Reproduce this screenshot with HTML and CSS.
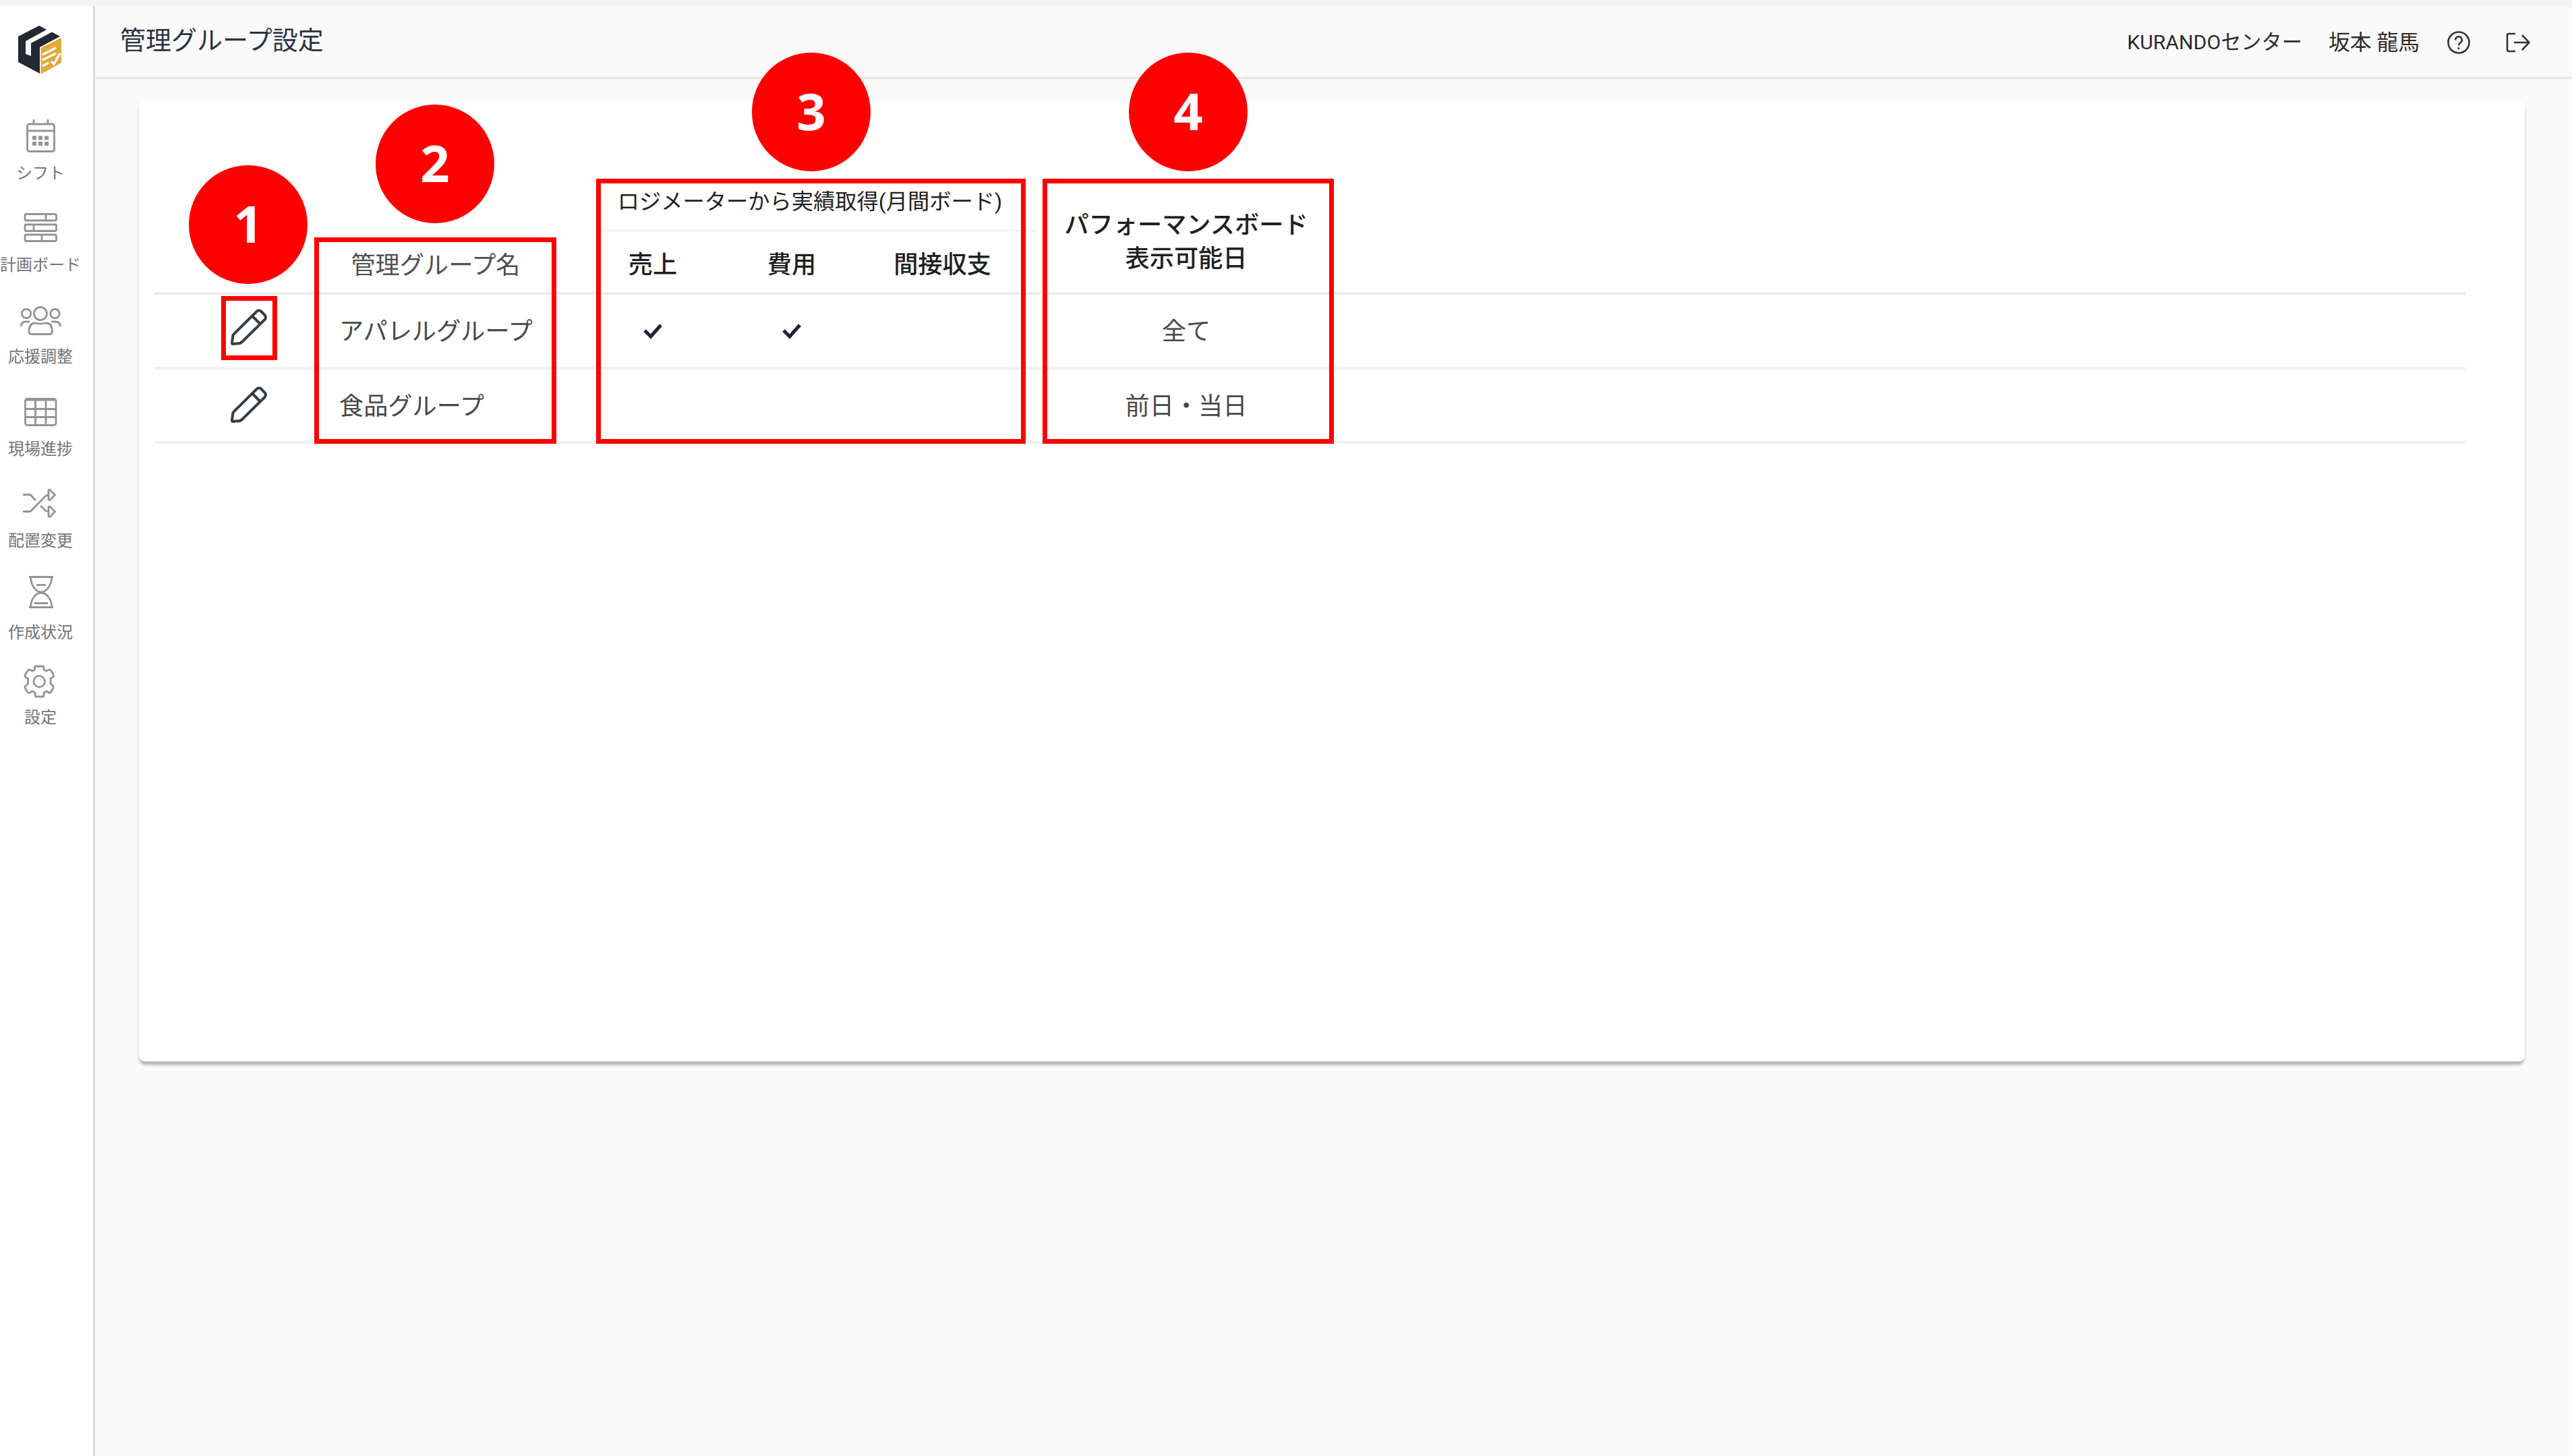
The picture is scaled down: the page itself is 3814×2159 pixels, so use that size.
FILE: index.html
```html
<!DOCTYPE html>
<html lang="ja">
<head>
<meta charset="utf-8">
<title>管理グループ設定</title>
<link rel="stylesheet" href="styles.css">
</head>
<body>
<div class="app">
  <nav class="sidebar">
    <svg class="logo" viewBox="0 20 120 100">
      <path fill="#232833" d="M58 38L69 44L38 61V80L46 83V64L77 47.500L89 54L59 70V109L27 92V54Z"/>
      <path fill="#e2a93b" d="M60.500 71L91 56V93L60.500 110Z"/>
      <path fill="none" stroke="#fff" stroke-width="3.200" d="M63 81L83 71M63 89L83 79M63 98L72 93M76 91L80 95L89 79"/>
    </svg>
    <a class="item"><svg viewBox="0 160 120 80"><rect x="40.500" y="184" width="40" height="40.500" rx="3"/><path d="M40 194H81M50 177V184M71 177V184"/><path class="dots" d="M48 204.500H54M57 204.500H63M66 204.500H72M48 213H54M57 213H63M66 213H72"/></svg><span>シフト</span></a>
    <a class="item"><svg viewBox="0 296 120 80"><rect x="37" y="317.500" width="46.500" height="9.500" rx="2"/><rect x="37" y="333" width="46.500" height="9.500" rx="2"/><rect x="37" y="348" width="46.500" height="9.500" rx="2"/><path d="M68 317V327M50 333V343M62 348V358"/></svg><span>計画ボード</span></a>
    <a class="item"><svg viewBox="0 432 120 80"><circle cx="60" cy="465" r="9.500"/><circle cx="39" cy="465" r="6.700"/><circle cx="81.500" cy="465" r="6.700"/><path d="M31 484Q32 477 38 477H44M76 477H82Q89 477 89.500 484M52 479Q60 481 68 479C75 479 77.500 484 77.500 492Q77 495.500 74 495.500H47Q43 495.500 43 492C43 484 45 479 52 479Z"/></svg><span>応援調整</span></a>
    <a class="item"><svg viewBox="0 568 120 80"><rect x="37.500" y="590.500" width="45.500" height="39" rx="3"/><path d="M37 592H83M37 605.500H83M37 617.500H83M52.500 592V630M68 592V630"/></svg><span>現場進捗</span></a>
    <a class="item"><svg viewBox="0 705 120 80"><path d="M34 733.500H45L53 742M34 758.500H45L67 736L71 733.500M60 750L68 757.500L71 758.500M72 726.500V741L74 741.500L81.500 734L74 726ZM72 751.500V766L74 766.500L81.500 758.500L74 751Z"/></svg><span>配置変更</span></a>
    <a class="item item-short"><svg viewBox="0 841 120 80"><path d="M43 855.500H79M43 900.500H79M45.500 856C46 868 53 878 61 878S76 868 77 856M45.500 900C46 888 53 879 61 879S76 888 77 900M54 867.300H68M51 894.500H71"/></svg><span>作成状況</span></a>
    <a class="item"><svg viewBox="0 967 120 80"><circle cx="58.200" cy="1010.500" r="8.300"/><path d="M53 988H63Q65 988 65 990V993L68.500 995L73 993Q75 993 76 994.500L79.500 1001.500Q79.500 1003 78.500 1004L75 1006V1014L78.500 1017Q79.500 1018 79 1020L75.500 1026.500Q74 1028 72.500 1027L68.500 1025L65 1027.500V1030.500Q65 1033 63 1033H54Q52 1033 52 1031V1027.500L48 1025L44.500 1027Q42 1028 41 1026.500L37 1020Q36.500 1018 38 1017L41.500 1014V1006L38 1004Q36.500 1003 37 1001L41 994.500Q42 993 44 993L48 995L51.500 993V990Q51.500 988 53 988Z"/></svg><span>設定</span></a>
  </nav>
  <div class="content">
    <header class="topbar">
      <h1>管理グループ設定</h1>
      <div class="account">
        <span class="center-name">KURANDOセンター</span>
        <span class="user">坂本 龍馬</span>
        <svg class="help" viewBox="0 0 36 36"><circle cx="18" cy="18" r="15.500"/><path d="M13.300 14.500A4.700 4.700 0 1 1 20.500 18Q18 19.800 18 22.500M18 25.200V28"/></svg>
        <svg class="logout" viewBox="0 0 36 30"><path d="M14 2H4Q2 2 2 4V26Q2 28 4 28H14M12 15H34M24 4L34.500 15L24 26"/></svg>
      </div>
    </header>
    <main class="card">
      <div class="row head">
        <div></div>
        <div class="name">管理グループ名</div>
        <div class="group">
          <div class="group-title">ロジメーターから実績取得(月間ボード)</div>
          <div class="group-cols"><span>売上</span><span>費用</span><span>間接収支</span></div>
        </div>
        <div class="days">パフォーマンスボード<br>表示可能日</div>
      </div>
      <div class="row">
        <div class="edit"><svg viewBox="0 0 54 54"><path d="M39 3.500Q42 1 45 3.500L50.500 9Q53 12 51 15.500L17 49L14 51L3 52Q2 52 2 50L3.500 39L6 36ZM32.500 11L43.500 22"/></svg></div>
        <div class="name">アパレルグループ</div>
        <div class="marks">
          <svg viewBox="0 0 28 24"><path d="M2 11L11 20L26 3"/></svg>
          <svg viewBox="0 0 28 24"><path d="M2 11L11 20L26 3"/></svg>
        </div>
        <div class="days">全て</div>
      </div>
      <div class="row">
        <div class="edit low"><svg viewBox="0 0 54 54"><path d="M39 3.500Q42 1 45 3.500L50.500 9Q53 12 51 15.500L17 49L14 51L3 52Q2 52 2 50L3.500 39L6 36ZM32.500 11L43.500 22"/></svg></div>
        <div class="name">食品グループ</div>
        <div class="marks"></div>
        <div class="days">前日・当日</div>
      </div>
    </main>
  </div>
</div>
<div class="frame f1"></div><div class="frame f2"></div><div class="frame f3"></div><div class="frame f4"></div>
<div class="badge b1">1</div><div class="badge b2">2</div><div class="badge b3">3</div><div class="badge b4">4</div>
</body>
</html>
```
FILE: styles.css
```css
* { box-sizing: border-box; }
body {
  margin: 0;
  background: #fafafa;
  font-family: Roboto, "Noto Sans CJK JP", sans-serif;
  color: #484848;
}
.app {
  display: flex;
  height: 2159px;
  border-top: 9px solid #f4f4f4;
}
svg { display: block; fill: none; }

/* Sidebar */
.sidebar {
  flex: none;
  width: 141px;
  background: #fff;
  border-right: 3px solid #d9d9d9;
  padding-top: 11px;
}
.logo { width: 120px; height: 100px; margin-bottom: 40px; }
.item {
  display: flex;
  flex-direction: column;
  align-items: center;
  width: 120px;
  height: 136.200px;
  font-size: 24px;
  line-height: 34px;
  white-space: nowrap;
  color: #747474;
}
.item-short { height: 126px; }
.item svg { width: 120px; height: 80px; stroke: #949494; stroke-width: 2.800; }
.item .dots { stroke-width: 6; }

/* Top bar */
.content { flex: 1; }
.topbar {
  display: flex;
  justify-content: space-between;
  align-items: center;
  height: 108px;
  padding: 0 62px 0 37px;
  border-bottom: 3px solid #e6e6e6;
}
h1 {
  margin: 0 0 3px;
  font-size: 38px;
  line-height: 56px;
  font-weight: 400;
  color: #2b3240;
}
.account {
  display: flex;
  align-items: center;
  line-height: 44px;
  color: #2c2c2c;
}
.center-name { margin: 2px 39px 0 0; font-size: 30.200px; }
.user { margin: 2px 40px 0 0; font-size: 31.800px; }
.account svg { stroke: #333; stroke-width: 2.600; margin-top: 2px; }
.help { width: 36px; height: 36px; margin-right: 52px; }
.logout { width: 36px; height: 30px; }

/* Settings table */
.card {
  width: 3538px;
  height: 1424px;
  margin: 33px 0 0 65px;
  padding: 115px 88px 0 22px;
  background: #fff;
  border-radius: 9px;
  box-shadow: 0 8px 5px -3px rgba(0, 0, 0, .2), 0 4px 5px rgba(0, 0, 0, .14);
}
.row {
  display: grid;
  grid-template-columns: 275px 381px 654px 442px 1fr;
  align-items: center;
  height: 110.700px;
  border-bottom: 4px solid #f1f1f1;
  font-size: 36.200px;
  line-height: 50px;
}
.name, .days { padding-top: 3px; }
.head { height: 172px; border-color: #ededed; color: #1f1f1f; }
.head .name { width: 286px; text-align: center; padding-top: 89px; color: #505050; }
.group { align-self: stretch; }
.group-title {
  height: 78px;
  padding-right: 20px;
  border-bottom: 2px solid #f0f0f0;
  text-align: center;
  font-size: 32.250px;
  line-height: 69px;
}
.group-cols, .marks {
  display: grid;
  grid-template-columns: 168px 244px 203px;
  justify-items: center;
}
.group-cols { padding-top: 25px; font-weight: 500; }
.days { text-align: center; }
.head .days { padding-top: 20px; font-weight: 500; }
.edit { padding-left: 114px; margin-top: -10px; }
.edit.low { margin-top: -2px; }
.edit svg { width: 54px; height: 54px; stroke: #353c47; stroke-width: 4; }
.marks svg { width: 28px; height: 24px; stroke: #1d2431; stroke-width: 5; }
.marks { padding-top: 1px; }

/* Numbered callouts over the page */
.frame { position: absolute; border: 7px solid #f00; }
.f1 { left: 328px; top: 439px; width: 83px; height: 95px; }
.f2 { left: 466px; top: 352px; width: 359px; height: 306px; }
.f3 { left: 884px; top: 265px; width: 637px; height: 393px; }
.f4 { left: 1546px; top: 265px; width: 432px; height: 393px; }
.badge {
  position: absolute;
  width: 176px;
  height: 176px;
  border-radius: 50%;
  background: #f00;
  color: #fff;
  font: 700 76px/172px "Noto Sans", sans-serif;
  text-align: center;
}
.b1 { left: 280px; top: 245px; }
.b2 { left: 557px; top: 155px; }
.b3 { left: 1115px; top: 78px; }
.b4 { left: 1674px; top: 78px; }
```
